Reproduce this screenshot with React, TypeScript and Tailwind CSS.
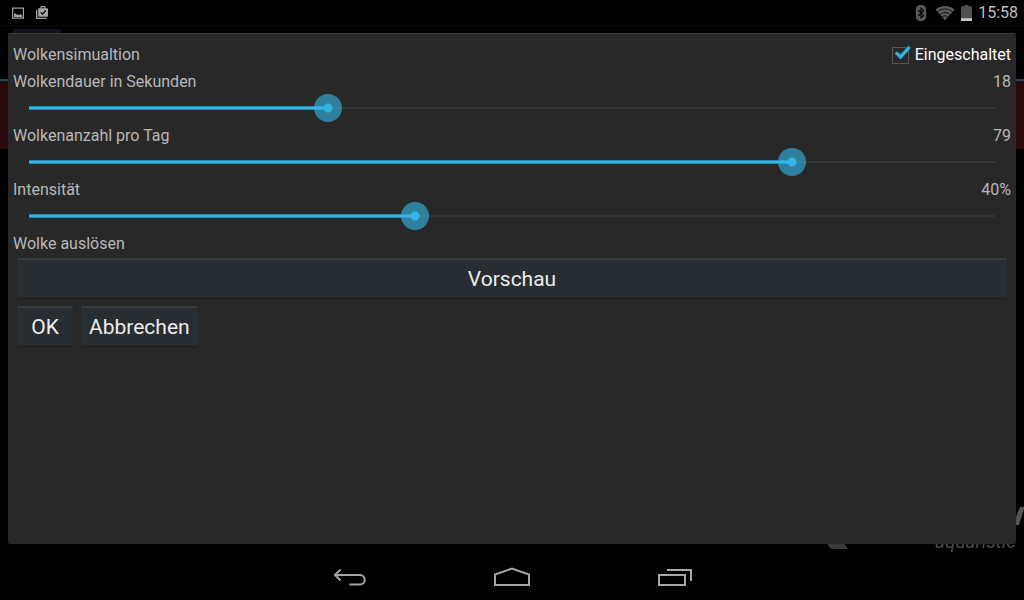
import { useState } from "react";
import type { CSSProperties, InputHTMLAttributes } from "react";

type SliderRowProps = {
  id: string;
  label: string;
  min: number;
  max: number;
  initial: number;
  unit?: string;
};

const rangeClass =
  "block h-8 w-full cursor-pointer appearance-none bg-transparent bg-no-repeat outline-none " +
  "[background-image:linear-gradient(#2587aa_1px,#33b5e5_1px,#33b5e5_3px,#2587aa_3px),linear-gradient(#353535,#353535)] " +
  "[background-position:14px_center] " +
  "[background-size:calc((100%-28px)*var(--fill))_4px,calc(100%-28px)_2px] " +
  "[&::-webkit-slider-thumb]:size-7 [&::-webkit-slider-thumb]:appearance-none [&::-webkit-slider-thumb]:rounded-full " +
  "[&::-webkit-slider-thumb]:[background:radial-gradient(circle,#33b5e5_4px,rgba(51,181,229,0.62)_5px)]";

function SliderRow({ id, label, min, max, initial, unit = "" }: SliderRowProps) {
  const [value, setValue] = useState(initial);
  const fill = (value - min) / (max - min);
  const props: InputHTMLAttributes<HTMLInputElement> = {
    id,
    min,
    max,
    value,
    onChange: (e) => setValue(Number(e.target.value)),
    style: { "--fill": fill } as CSSProperties,
  };
  return (
    <div>
      <div className="flex h-[22px] items-center justify-between pt-0.5">
        <label htmlFor={id}>{label}</label>
        <output htmlFor={id}>
          {value}
          {unit}
        </output>
      </div>
      <div className="px-0.5">
        <input type="range" className={rangeClass} {...props} />
      </div>
    </div>
  );
}

function StatusBar() {
  return (
    <header className="relative flex h-[26px] shrink-0 items-center justify-between border-b border-[#0a0a0a] pr-1.5 pl-3">
      <div className="flex items-center gap-3 text-[#a3a3a3]">
        <svg className="h-4 w-3" viewBox="0 0 12 16" aria-hidden="true">
          <rect x="0.6" y="3.1" width="10.8" height="10" fill="none" stroke="currentColor" strokeWidth="1.2" />
          <path d="M2 12V8.800l1.200-.6 1.500 1.600 1-.5 1.300.9 1.500-1.200 1.500 1.200V12z" fill="currentColor" />
        </svg>
        <svg className="h-4 w-3" viewBox="0 0 12 16" overflow="visible" aria-hidden="true">
          <path d="M0.700 5v8.300h9.800" fill="none" stroke="currentColor" strokeWidth="1.3" />
          <path d="M5.200 3.500V1.700h3.600v1.800" fill="none" stroke="currentColor" strokeWidth="1.2" />
          <rect x="2.200" y="3.200" width="9.800" height="8.600" rx="0.800" fill="currentColor" />
          <path d="M4.700 7.300l1.800 1.900 3.300-3.700" fill="none" stroke="#000" strokeWidth="1.2" />
        </svg>
      </div>
      <div className="flex items-center">
        <svg className="mr-2 h-4 w-3" viewBox="0 0 12 16" aria-hidden="true">
          <rect x="0.800" y="0" width="10.400" height="16" rx="4.500" fill="#595959" />
          <path d="M3.200 5l5.400 5.400L6 12.800V3.200l2.600 2.400L3.200 11" fill="none" stroke="#000" strokeWidth="1.1" />
        </svg>
        <svg className="mr-1.5 h-4 w-5" viewBox="0 0 20 16" aria-hidden="true">
          <path d="M0.500 4.800a14 14 0 0 1 19 0L10 15.300z" fill="#5c5c5c" />
          <path d="M2.200 7.100a11 11 0 0 1 15.600 0M4.600 9.700a7.600 7.600 0 0 1 10.800 0M7 12a4.400 4.400 0 0 1 6 0" fill="none" stroke="#000" strokeWidth="0.8" />
        </svg>
        <svg className="mr-1.5 h-4 w-[11px]" viewBox="0 0 11 16" aria-hidden="true">
          <path d="M3.500 0h4v1.300H11V16H0V1.300h3.500z" fill="#505050" />
          <path d="M0 13.200h11V16H0z" fill="#c8c8c8" />
        </svg>
        <time className="text-base text-[#bebebe]">15:58</time>
      </div>
    </header>
  );
}

function Backdrop() {
  return (
    <div className="absolute inset-0 overflow-hidden bg-black" aria-hidden="true">
      <div className="mt-[3px] ml-[13px] h-[50px] w-12 bg-[#101119]" />
      <div className="h-0.5 bg-[#124a5e]" />
      <div className="h-[68px] bg-[#2a0a0c]" />
      <svg className="absolute right-0 bottom-0 h-12 w-[200px] text-[#3b3b3b]" viewBox="0 0 200 48" fill="currentColor">
        <path d="M192 21v-8l4-10h4v2l-5 16z" fill="#555" />
        <path d="M3 39h17l4 6H8q-3-1-5-6z" />
      </svg>
      <span className="absolute right-2 -bottom-0.5 text-[19px] leading-6 text-[#4a4a4a] italic">aquaristic</span>
    </div>
  );
}

function NavBar() {
  const buttonClass = "flex h-12 w-[164px] items-center justify-center pt-1";
  return (
    <nav className="flex h-12 shrink-0 justify-center bg-black text-[#a6a6a6]">
      <button type="button" aria-label="Zurück" className={buttonClass}>
        <svg className="h-6 w-9" viewBox="0 0 36 24" fill="none" stroke="currentColor" strokeWidth="2">
          <path d="M5 9h25a4.700 4.700 0 0 1 0 9.500H19.500M10.500 3.500L5 9l5.500 5.500" />
        </svg>
      </button>
      <button type="button" aria-label="Startseite" className={buttonClass}>
        <svg className="h-6 w-9" viewBox="0 0 36 24" fill="none" stroke="currentColor" strokeWidth="2">
          <path d="M1 8.500L18 2.500l17 6V19H1z" />
        </svg>
      </button>
      <button type="button" aria-label="Letzte Apps" className={buttonClass}>
        <svg className="h-6 w-9" viewBox="0 0 36 24" fill="none" stroke="currentColor" strokeWidth="2">
          <path d="M1 9h26v10H1zM9 4h24v11" />
        </svg>
      </button>
    </nav>
  );
}

const actionClass =
  "h-10 min-w-14 rounded-[2px] border-t-2 border-[#373c3e] bg-[#282d31] px-2 text-[21px] leading-9 text-[#ececec] shadow-[0_1px_1px_#1c1c1c]";

export default function App() {
  const [enabled, setEnabled] = useState(true);
  return (
    <div className="flex min-h-screen flex-col bg-black font-[Roboto,sans-serif]">
      <StatusBar />
      <div className="relative flex flex-1 flex-col px-2 pt-[7px] pb-2">
        <Backdrop />
        <main
          role="dialog"
          aria-label="Wolkensimualtion"
          className="relative flex-1 rounded-[2px] border-t border-[#3c3c3c] bg-[#282828] px-[5px] pt-1 text-base text-[#b8b8b8]"
        >
          <div className="flex h-8 items-center justify-between pt-0.5">
            <h1>Wolkensimualtion</h1>
            <label className="flex items-center gap-1.5 text-white">
              <span className="relative size-[17px]">
                <input
                  type="checkbox"
                  checked={enabled}
                  onChange={(e) => setEnabled(e.target.checked)}
                  className="block size-[17px] appearance-none border border-[#555]"
                />
                {enabled && (
                  <svg
                    className="pointer-events-none absolute inset-0 size-[18px] drop-shadow-[0_0_1px_#1c6783]"
                    viewBox="0 0 18 18"
                    overflow="visible"
                    fill="none"
                    stroke="#33b5e5"
                    strokeWidth="3"
                    aria-hidden="true"
                  >
                    <path d="M4 5.500l4.500 4.500L17.500 0" />
                  </svg>
                )}
              </span>
              Eingeschaltet
            </label>
          </div>
          <SliderRow id="dauer" label="Wolkendauer in Sekunden" min={5} max={47} initial={18} />
          <SliderRow id="anzahl" label="Wolkenanzahl pro Tag" min={0} max={100} initial={79} />
          <SliderRow id="intensitaet" label="Intensität" min={0} max={100} initial={40} unit="%" />
          <p className="flex h-[22px] items-center pt-0.5">Wolke auslösen</p>
          <div className="flex flex-col gap-2 px-1 pt-1">
            <button type="button" className={actionClass}>
              Vorschau
            </button>
            <div className="flex gap-2">
              <button type="button" className={actionClass}>
                OK
              </button>
              <button type="button" className={actionClass}>
                Abbrechen
              </button>
            </div>
          </div>
        </main>
      </div>
      <NavBar />
    </div>
  );
}
